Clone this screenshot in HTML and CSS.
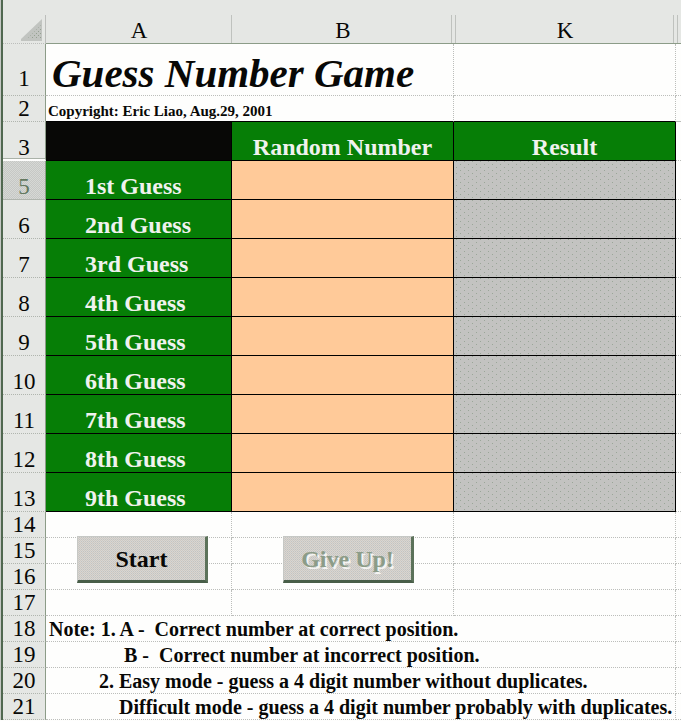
FILE: index.html
```html
<!DOCTYPE html>
<html lang="en">
<head>
<meta charset="utf-8">
<title>Guess Number Game</title>
<link rel="stylesheet" href="styles.css">
</head>
<body>
<main class="sheet">
<table class="grid">
<colgroup><col class="col-index"><col class="col-a"><col class="col-b"><col class="col-k"><col></colgroup>
<thead>
<tr class="letters">
<td class="corner"><svg class="select-all" viewBox="0 0 22 22" aria-hidden="true"><defs><pattern id="dots" width="4" height="4" patternUnits="userSpaceOnUse"><path fill="#c1c4c0" d="M0 0h4v4H0z"/><path fill="#94a090" d="M1 0h1v1H1zM3 2h1v1H3z"/></pattern></defs><path fill="#c1c4c0" d="M21 0v22H0v-2z"/><path fill="url(#dots)" d="M20 6v13H7z"/></svg></td>
<th scope="col" class="letter single">A</th>
<th scope="col" class="letter before-hidden">B</th>
<th scope="col" class="letter after-hidden before-hidden">K</th>
<td class="letter after-hidden"></td>
</tr>
</thead>
<tbody>
<tr class="title-row"><th scope="row">1</th><td colspan="2"><h1>Guess Number Game</h1></td><td></td><td></td></tr>
<tr class="short copyright"><th scope="row">2</th><td colspan="2">Copyright: Eric Liao, Aug.29, 2001</td><td></td><td></td></tr>
<tr class="tall heads"><th scope="row" class="above-hidden">3</th><td class="blank"></td><td class="head">Random Number</td><td class="head">Result</td><td></td></tr>
<tr class="tall"><th scope="row" class="active">5</th><td class="label">1st Guess</td><td class="number"></td><td class="result"></td><td></td></tr>
<tr class="tall"><th scope="row">6</th><td class="label">2nd Guess</td><td class="number"></td><td class="result"></td><td></td></tr>
<tr class="tall"><th scope="row">7</th><td class="label">3rd Guess</td><td class="number"></td><td class="result"></td><td></td></tr>
<tr class="tall"><th scope="row">8</th><td class="label">4th Guess</td><td class="number"></td><td class="result"></td><td></td></tr>
<tr class="tall"><th scope="row">9</th><td class="label">5th Guess</td><td class="number"></td><td class="result"></td><td></td></tr>
<tr class="tall"><th scope="row">10</th><td class="label">6th Guess</td><td class="number"></td><td class="result"></td><td></td></tr>
<tr class="tall"><th scope="row">11</th><td class="label">7th Guess</td><td class="number"></td><td class="result"></td><td></td></tr>
<tr class="tall"><th scope="row">12</th><td class="label">8th Guess</td><td class="number"></td><td class="result"></td><td></td></tr>
<tr class="tall"><th scope="row">13</th><td class="label">9th Guess</td><td class="number"></td><td class="result"></td><td></td></tr>
<tr class="short"><th scope="row">14</th><td class="anchor"><button type="button" class="btn btn-start">Start</button></td><td class="anchor"><button type="button" class="btn btn-give-up" disabled>Give Up!</button></td><td></td><td></td></tr>
<tr class="short"><th scope="row">15</th><td></td><td></td><td></td><td></td></tr>
<tr class="short"><th scope="row">16</th><td></td><td></td><td></td><td></td></tr>
<tr class="short"><th scope="row">17</th><td></td><td></td><td></td><td></td></tr>
<tr class="short note"><th scope="row">18</th><td colspan="3">Note: 1. A -  Correct number at correct position.</td><td></td></tr>
<tr class="short note"><th scope="row">19</th><td colspan="3">               B -  Correct number at incorrect position.</td><td></td></tr>
<tr class="short note"><th scope="row">20</th><td colspan="3">          2. Easy mode - guess a 4 digit number without duplicates.</td><td></td></tr>
<tr class="short note"><th scope="row">21</th><td colspan="3">              Difficult mode - guess a 4 digit number probably with duplicates.</td><td></td></tr>
</tbody>
</table>
</main>
</body>
</html>
```

FILE: styles.css
```css
:root {
  --chrome: #e5e7e4;
  --chrome-line: #8c9c88;
  --grid-line: #bcbebb;
  --green: #067e06;
  --ink: #080806;
}

* {
  box-sizing: border-box;
}

body {
  margin: 0;
  background: #fefefd;
  color: var(--ink);
  font-family: "Liberation Serif", "Times New Roman", serif;
}

.sheet {
  border-left: 1px solid #c5c8c4;
  overflow: hidden;
}

.grid {
  width: 100%;
  table-layout: fixed;
  border-collapse: separate;
  border-spacing: 0;
  border-left: 2px solid #506850;
}

.col-index { width: 43px; }
.col-a { width: 186px; }
.col-b,
.col-k { width: 222px; }

td,
th {
  padding: 0;
  vertical-align: bottom;
}

/* Column letters */
.letters { height: 44px; }

.corner,
.letter {
  background-color: var(--chrome);
  border-bottom: 1px solid var(--chrome-line);
}

.corner {
  background-image: linear-gradient(var(--grid-line), var(--grid-line));
  background-position: right bottom;
  background-size: 1px 28px;
  background-repeat: no-repeat;
  border-bottom: 1px dotted var(--grid-line);
}

.select-all {
  display: block;
  width: 22px;
  height: 22px;
  margin: 0 3px 2px auto;
}

.letter {
  --line: linear-gradient(#bfc2be, #bfc2be);
  font-size: 23px;
  font-weight: 400;
  line-height: 24px;
  background-repeat: no-repeat;
  background-size: 1px 28px;
}

.single {
  background-image: var(--line);
  background-position: right bottom;
}

.before-hidden {
  background-image: var(--line);
  background-position: right 2px bottom;
}

.after-hidden {
  background-image: var(--line);
  background-position: left 1px bottom;
}

.after-hidden.before-hidden {
  background-image: var(--line), var(--line);
  background-position: left 1px bottom, right 2px bottom;
}

/* Row numbers and cells */
tbody th {
  background-color: var(--chrome);
  border-right: 1px solid var(--chrome-line);
  border-bottom: 1px dotted #b0b5ae;
  font-size: 23px;
  font-weight: 400;
  line-height: 24px;
}

tbody td {
  border-right: 1px dotted var(--grid-line);
  border-bottom: 1px dotted var(--grid-line);
}

tbody td:last-child {
  border-right: 0;
}

.title-row { height: 52px; }
.short { height: 26px; }
.tall { height: 39px; }

.title-row th {
  padding-bottom: 4px;
}

h1 {
  margin: 0;
  padding-left: 6px;
  font-size: 41px;
  font-style: italic;
  font-weight: 700;
  line-height: 44px;
  white-space: nowrap;
}

.copyright td {
  padding-left: 2px;
  border-bottom: 1px solid #000;
  font-size: 15px;
  font-weight: 700;
  line-height: 20px;
  white-space: nowrap;
}

.copyright td:last-child {
  border-bottom: 1px solid var(--grid-line);
}

.tall .blank,
.tall .head,
.tall .label,
.tall .number,
.tall .result {
  border-right: 1px solid #000;
  border-bottom: 1px solid #000;
  font-size: 24px;
  font-weight: 700;
  line-height: 26px;
}

.tall .blank {
  background: var(--ink);
}

.tall .head,
.tall .label {
  background: var(--green);
  color: #f0f2ee;
}

.tall .head {
  text-align: center;
}

.tall .label {
  padding-left: 39px;
}

.tall .number {
  background: #ffca99;
}

.tall .result {
  background-color: #c3c3c1;
  background-image:
    linear-gradient(#9aa698, #9aa698),
    linear-gradient(#9aa698, #9aa698);
  background-image:
    conic-gradient(from 270deg at 1px 1px, #9aa698 25%, transparent 0),
    conic-gradient(from 270deg at 1px 1px, #9aa698 25%, transparent 0);
  background-position: 6px 3px, 10px 6px;
  background-size: 8px 6px;
}

th.above-hidden {
  border-bottom: 2px solid #fefefd;
  box-shadow: inset 0 -1px #aab2a8;
  line-height: 22px;
}

th.active {
  background-color: #d6d8d5;
  background-image: conic-gradient(#c6c8c5 25%, transparent 0 50%, #c6c8c5 0 75%, transparent 0);
  background-size: 2px 2px;
  border-bottom-style: solid;
  color: #63785f;
}

.note td {
  padding-left: 3px;
  font-size: 20px;
  font-weight: 700;
  line-height: 24px;
  white-space: pre;
}

/* Buttons float above the cells, anchored to row 14 */
.anchor {
  position: relative;
}

.btn {
  position: absolute;
  top: 24px;
  width: 131px;
  height: 47px;
  padding: 0;
  border: 1px solid #c6c8c5;
  border-right: 3px solid #5c725a;
  border-bottom: 3px solid #485e48;
  background-color: #d8d6d2;
  background-image: conic-gradient(#c3c3c1 25%, transparent 0 50%, #cec9c3 0 75%, transparent 0);
  background-size: 2px 2px;
  color: var(--ink);
  font: 700 24px/28px "Liberation Serif", "Times New Roman", serif;
}

.btn-start { left: 31px; }
.btn-give-up { left: 51px; }

.btn:disabled {
  color: #8c9c88;
  text-shadow: 2px 2px #f4f4f2;
}
```
